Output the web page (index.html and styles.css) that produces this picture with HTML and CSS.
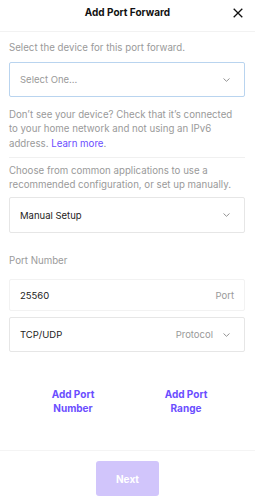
FILE: index.html
```html
<!DOCTYPE html>
<html>
<head>
<meta charset="utf-8">
<link rel="stylesheet" href="styles.css">
</head>
<body>
<div class="modal">
  <header class="header">
    <h1 class="title">Add Port Forward</h1>
    <button class="close" aria-label="Close">
      <svg width="10" height="10" viewBox="0 0 10 10"><path d="M0.7 0.7L9.3 9.3M9.3 0.7L0.7 9.3" stroke="#111" stroke-width="1.3" fill="none"/></svg>
    </button>
  </header>
  <main class="content">
    <p class="label first">Select the device for this port forward.</p>
    <div class="field focused">
      <span class="placeholder">Select One...</span>
      <span class="chev"><svg width="7" height="4" viewBox="0 0 7 4"><path d="M0.5 0.5L3.5 3.3L6.5 0.5" stroke="#888" stroke-width="0.9" fill="none"/></svg></span>
    </div>
    <p class="para p1">Don’t see your device? Check that it’s connected<br>to your home network and not using an IPv6<br>address. <a class="link">Learn more</a>.</p>
    <div class="divider"></div>
    <p class="para p2">Choose from common applications to use a<br>recommended configuration, or set up manually.</p>
    <div class="field select">
      <span class="value">Manual Setup</span>
      <span class="chev"><svg width="7" height="4" viewBox="0 0 7 4"><path d="M0.5 0.5L3.5 3.3L6.5 0.5" stroke="#888" stroke-width="0.9" fill="none"/></svg></span>
    </div>
    <p class="label port-label">Port Number</p>
    <div class="field input">
      <span class="value">25560</span>
      <span class="suffix">Port</span>
    </div>
    <div class="field select proto">
      <span class="value">TCP/UDP</span>
      <span class="right"><span class="suffix">Protocol</span><span class="chev"><svg width="7" height="4" viewBox="0 0 7 4"><path d="M0.5 0.5L3.5 3.3L6.5 0.5" stroke="#888" stroke-width="0.9" fill="none"/></svg></span></span>
    </div>
    <div class="actions">
      <a class="action">Add Port<br>Number</a>
      <a class="action">Add Port<br>Range</a>
    </div>
  </main>
  <footer class="footer">
    <button class="next">Next</button>
  </footer>
</div>
</body>
</html>
```
FILE: styles.css
```css
* { box-sizing: border-box; }
html, body { margin: 0; padding: 0; background: #fff; }
body { font-family: Inter, "Noto Sans", sans-serif; color: #222; }
.modal { width: 255px; height: 500px; display: flex; flex-direction: column; }
.header { height: 32px; border-bottom: 1px solid #f2f2f2; display: flex; justify-content: center; align-items: flex-start; padding-top: 5px; position: relative; }
.title { margin: 0; font-size: 10px; line-height: 14px; font-weight: 700; color: #111; }
.close { position: absolute; right: 12px; top: 8px; background: none; border: 0; padding: 0; width: 10px; height: 10px; display: flex; }
.content { flex: 1; padding: 0 10px 0 9px; }
.label { margin: 0; font-size: 9.7px; color: #9a9a9a; line-height: 14.5px; }
.label.first { margin-top: 9px; margin-bottom: 6.5px; }
.field { height: 35px; border: 1px solid #e6e6e6; border-radius: 2px; display: flex; align-items: center; justify-content: space-between; padding: 0 12px 0 10px; font-size: 9.5px; }
.field.focused { border: 1.5px solid #b9d4ef; }
.placeholder { color: #9a9a9a; }
.value { color: #222; }
.chev { display: flex; width: 7px; margin-right: 2px; }
.para { margin: 0; font-size: 9.7px; color: #9a9a9a; line-height: 14.5px; white-space: nowrap; }
.p1 { margin-top: 10.5px; }
.link { color: #6b4eff; }
.divider { height: 1px; background: #f0f0f0; margin-top: 6px; }
.p2 { margin-top: 5.5px; }
.field.select { height: 36px; margin-top: 4.5px; }
.port-label { margin-top: 20.5px; margin-bottom: 11px; }
.field.input { height: 32px; border-color: #f2f2f2; }
.suffix { color: #999; }
.field.input .suffix { margin-right: -2px; }
.field.proto { height: 35px; margin-top: 6px; }
.right { display: flex; align-items: center; gap: 10px; }
.actions { display: grid; grid-template-columns: 113px 113px; margin-top: 34.5px; padding-left: 7.5px; }
.action { text-align: center; font-size: 10px; font-weight: 700; color: #6b4eff; line-height: 14.5px; }
.footer { height: 50px; border-top: 1px solid #f4f4f4; display: flex; justify-content: center; padding-top: 10px; }
.next { width: 63px; height: 35px; background: #d1c5fb; color: #fff; border: 0; border-radius: 3px; font-family: inherit; font-size: 10px; font-weight: 700; }
```
